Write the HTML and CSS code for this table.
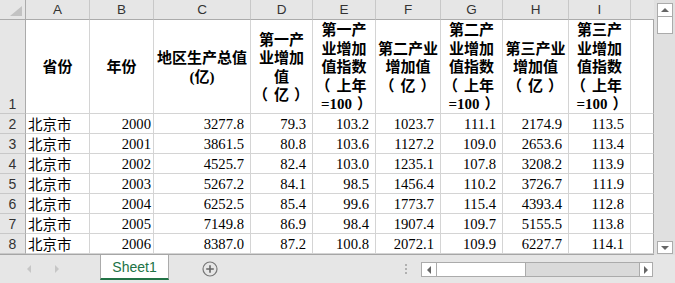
FILE: index.html
```html
<!DOCTYPE html>
<html lang="zh">
<head>
<meta charset="utf-8">
<title>Sheet1</title>
<link rel="stylesheet" href="styles.css">
</head>
<body>
<div class="app">
  <div class="main">
    <div class="sheet">
      <div class="corner"><span class="tri"></span></div>
      <div class="ch">A</div>
      <div class="ch">B</div>
      <div class="ch">C</div>
      <div class="ch">D</div>
      <div class="ch">E</div>
      <div class="ch">F</div>
      <div class="ch">G</div>
      <div class="ch">H</div>
      <div class="ch">I</div>
      <div class="ch last"></div>

      <div class="rh r1">1</div>
      <div class="hd">省份</div>
      <div class="hd">年份</div>
      <div class="hd"><span>地区生产总值<br>(亿)</span></div>
      <div class="hd"><span>第一产<br>业增加<br>值<br><span class="po">（</span>亿<span class="pc">）</span></span></div>
      <div class="hd"><span>第一产<br>业增加<br>值指数<br><span class="po">（</span>上年<br>=100<span class="pc">）</span></span></div>
      <div class="hd"><span>第二产业<br>增加值<br><span class="po">（</span>亿<span class="pc">）</span></span></div>
      <div class="hd"><span>第二产<br>业增加<br>值指数<br><span class="po">（</span>上年<br>=100<span class="pc">）</span></span></div>
      <div class="hd"><span>第三产业<br>增加值<br><span class="po">（</span>亿<span class="pc">）</span></span></div>
      <div class="hd"><span>第三产<br>业增加<br>值指数<br><span class="po">（</span>上年<br>=100<span class="pc">）</span></span></div>
      <div class="c last"></div>

      <div class="rh">2</div><div class="c txt">北京市</div><div class="c yr">2000</div><div class="c num">3277.8</div><div class="c num">79.3</div><div class="c num">103.2</div><div class="c num">1023.7</div><div class="c num">111.1</div><div class="c num">2174.9</div><div class="c num">113.5</div><div class="c last"></div>
      <div class="rh">3</div><div class="c txt">北京市</div><div class="c yr">2001</div><div class="c num">3861.5</div><div class="c num">80.8</div><div class="c num">103.6</div><div class="c num">1127.2</div><div class="c num">109.0</div><div class="c num">2653.6</div><div class="c num">113.4</div><div class="c last"></div>
      <div class="rh">4</div><div class="c txt">北京市</div><div class="c yr">2002</div><div class="c num">4525.7</div><div class="c num">82.4</div><div class="c num">103.0</div><div class="c num">1235.1</div><div class="c num">107.8</div><div class="c num">3208.2</div><div class="c num">113.9</div><div class="c last"></div>
      <div class="rh">5</div><div class="c txt">北京市</div><div class="c yr">2003</div><div class="c num">5267.2</div><div class="c num">84.1</div><div class="c num">98.5</div><div class="c num">1456.4</div><div class="c num">110.2</div><div class="c num">3726.7</div><div class="c num">111.9</div><div class="c last"></div>
      <div class="rh">6</div><div class="c txt">北京市</div><div class="c yr">2004</div><div class="c num">6252.5</div><div class="c num">85.4</div><div class="c num">99.6</div><div class="c num">1773.7</div><div class="c num">115.4</div><div class="c num">4393.4</div><div class="c num">112.8</div><div class="c last"></div>
      <div class="rh">7</div><div class="c txt">北京市</div><div class="c yr">2005</div><div class="c num">7149.8</div><div class="c num">86.9</div><div class="c num">98.4</div><div class="c num">1907.4</div><div class="c num">109.7</div><div class="c num">5155.5</div><div class="c num">113.8</div><div class="c last"></div>
      <div class="rh">8</div><div class="c txt">北京市</div><div class="c yr">2006</div><div class="c num">8387.0</div><div class="c num">87.2</div><div class="c num">100.8</div><div class="c num">2072.1</div><div class="c num">109.9</div><div class="c num">6227.7</div><div class="c num">114.1</div><div class="c last"></div>
    </div>
    <div class="vscroll">
      <div class="sbtn vup"><span class="arr-up"></span></div>
      <div class="vthumb"></div>
      <div class="vspace"></div>
      <div class="sbtn vdown"><span class="arr-down"></span></div>
    </div>
  </div>
  <div class="tabbar">
    <div class="nav">
      <span class="nav-left"></span>
      <span class="nav-right"></span>
    </div>
    <div class="tab">Sheet1</div>
    <div class="add">
      <svg width="16" height="16" viewBox="0 0 16 16"><circle cx="8" cy="8" r="7" fill="none" stroke="#777" stroke-width="1.2"/><path d="M8 4.2v7.6M4.2 8h7.6" stroke="#666" stroke-width="1.6"/></svg>
    </div>
    <div class="dots"><i></i><i></i><i></i></div>
    <div class="hscroll">
      <div class="sbtn hleft"><span class="arr-left"></span></div>
      <div class="hthumb"></div>
      <div class="htrack"></div>
      <div class="sbtn hright"><span class="arr-right"></span></div>
    </div>
  </div>
</div>
</body>
</html>
```
FILE: styles.css
```css
html, body {
  margin: 0;
  padding: 0;
}
body {
  width: 675px;
  height: 283px;
  overflow: hidden;
  background: #e6e6e6;
}
.app {
  width: 675px;
  height: 283px;
  display: flex;
  flex-direction: column;
}
.main {
  display: flex;
  height: 255px;
}
.sheet {
  width: 654px;
  height: 255px;
  box-sizing: border-box;
  display: grid;
  grid-template-columns: 26px 64px 64px 97px 62px 63px 65px 62px 66px 62px 23px;
  grid-template-rows: 20px 94px repeat(7, 20px);
  background: #fff;
  border-bottom: 1px solid #a6a6a6;
}
.sheet > div {
  box-sizing: border-box;
  border-right: 1px solid #d4d4d4;
  border-bottom: 1px solid #d4d4d4;
  overflow: hidden;
  white-space: nowrap;
}
.corner {
  background: #e6e6e6;
  position: relative;
}
.sheet > .corner {
  border-right: 1px solid #ababab;
  border-bottom: 1px solid #ababab;
}
.tri {
  position: absolute;
  right: 3px;
  bottom: 3px;
  width: 0;
  height: 0;
  border-left: 12px solid transparent;
  border-bottom: 10px solid #c2c2c2;
}
.sheet > .ch {
  background: #e6e6e6;
  border-right: 1px solid #c8c8c8;
  border-bottom: 1px solid #ababab;
  font-family: "Liberation Sans", "Noto Sans", sans-serif;
  font-size: 13.5px;
  color: #333;
  display: flex;
  align-items: center;
  justify-content: center;
}
.sheet > .ch.last {
  border-right: none;
}
.sheet > .rh {
  background: #e6e6e6;
  border-right: 1px solid #ababab;
  border-bottom: 1px solid #c8c8c8;
  font-family: "Liberation Sans", "Noto Sans", sans-serif;
  font-size: 14px;
  color: #333;
  display: flex;
  align-items: center;
  justify-content: center;
}
.sheet > .rh.r1 {
  align-items: flex-end;
  padding-bottom: 1px;
}
.sheet > .last {
  border-right: 1px solid #a6a6a6;
}
.hd {
  font-family: "Liberation Serif", "Noto Sans CJK SC", serif;
  font-weight: bold;
  font-size: 15px;
  line-height: 18.5px;
  color: #000;
  text-align: center;
  display: flex;
  align-items: center;
  justify-content: center;
  padding-top: 2px;
}
.po {
  margin-left: -6px;
  margin-right: 6px;
}
.pc {
  margin-left: 5px;
  margin-right: -5px;
}
.txt {
  font-family: "Noto Sans CJK SC", sans-serif;
  font-size: 14.5px;
  line-height: 19px;
  padding-left: 2px;
  color: #000;
}
.num, .yr {
  font-family: "Liberation Serif", serif;
  font-size: 14.67px;
  line-height: 20px;
  text-align: right;
  color: #000;
}
.num {
  padding-right: 6px;
}
.yr {
  padding-right: 2px;
}

/* vertical scrollbar */
.vscroll {
  width: 21px;
  height: 255px;
  display: flex;
  flex-direction: column;
  padding: 3px 0 0 3px;
  box-sizing: border-box;
  background: #e0e0e0;
}
.sbtn {
  box-sizing: border-box;
  background: #fff;
  border: 1px solid #ababab;
  display: flex;
  align-items: center;
  justify-content: center;
}
.vup {
  width: 16px;
  height: 14px;
}
.vthumb {
  width: 16px;
  height: 17px;
  box-sizing: border-box;
  background: #fff;
  border: 1px solid #ababab;
  border-top: none;
}
.vspace {
  flex: 1;
}
.vdown {
  width: 16px;
  height: 13px;
  margin-bottom: 1px;
}
.arr-up {
  width: 0; height: 0;
  border-left: 4px solid transparent;
  border-right: 4px solid transparent;
  border-bottom: 4px solid #666;
}
.arr-down {
  width: 0; height: 0;
  border-left: 4px solid transparent;
  border-right: 4px solid transparent;
  border-top: 4px solid #666;
}
.arr-left {
  width: 0; height: 0;
  border-top: 4px solid transparent;
  border-bottom: 4px solid transparent;
  border-right: 4px solid #666;
}
.arr-right {
  width: 0; height: 0;
  border-top: 4px solid transparent;
  border-bottom: 4px solid transparent;
  border-left: 4px solid #666;
}

/* tab bar */
.tabbar {
  height: 28px;
  display: flex;
  align-items: flex-start;
  background: #e6e6e6;
}
.nav {
  width: 100px;
  height: 28px;
  display: flex;
  align-items: center;
  padding-left: 27px;
  box-sizing: border-box;
  gap: 24px;
}
.nav-left {
  width: 0; height: 0;
  border-top: 4px solid transparent;
  border-bottom: 4px solid transparent;
  border-right: 4px solid #c6c6c6;
}
.nav-right {
  width: 0; height: 0;
  border-top: 4px solid transparent;
  border-bottom: 4px solid transparent;
  border-left: 4px solid #c6c6c6;
}
.tab {
  width: 69px;
  height: 25px;
  box-sizing: border-box;
  background: #fff;
  border-left: 1px solid #ababab;
  border-right: 1px solid #ababab;
  border-bottom: 2px solid #217346;
  color: #217346;
  font-family: "Liberation Sans", "Noto Sans", sans-serif;
  font-size: 14px;
  display: flex;
  align-items: center;
  justify-content: center;
  padding-top: 1px;
}
.add {
  width: 16px;
  height: 16px;
  margin-left: 33px;
  margin-top: 6px;
}
.add svg {
  display: block;
}
.dots {
  margin-left: 187px;
  margin-top: 9px;
  width: 2px;
  display: flex;
  flex-direction: column;
  gap: 2px;
}
.dots i {
  display: block;
  width: 2px;
  height: 2px;
  background: #b0b0b0;
}
.hscroll {
  margin-left: 14px;
  margin-top: 7px;
  width: 232px;
  height: 15px;
  display: flex;
  background: #dadada;
  box-sizing: border-box;
}
.hleft {
  width: 16px;
  height: 15px;
}
.hthumb {
  width: 89px;
  height: 15px;
  box-sizing: border-box;
  background: #fff;
  border: 1px solid #ababab;
  border-left: none;
}
.htrack {
  flex: 1;
  border-top: 1px solid #ababab;
  border-bottom: 1px solid #ababab;
}
.hright {
  width: 14px;
  height: 15px;
}
```
